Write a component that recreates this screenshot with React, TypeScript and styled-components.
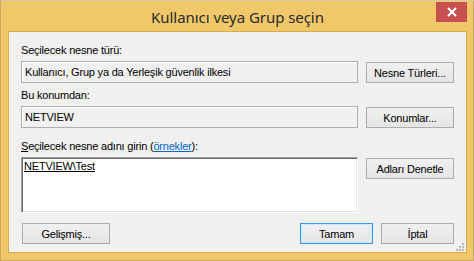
import styled, { createGlobalStyle } from "styled-components";

const Global = createGlobalStyle`
  html, body { margin: 0; padding: 0; background: #fff; }
  body { font-family: "Liberation Sans", Arial, sans-serif; }
`;

const UI = `"Liberation Sans", Arial, sans-serif`;

export default function App() {
  return (
    <>
      <Global />
      <Window>
        <TitleBar>
          <span />
          <Title>Kullanıcı veya Grup seçin</Title>
          <Close aria-label="Kapat">
            <svg width="10" height="10" viewBox="0 0 10 10">
              <path d="M1 1 L9 9 M9 1 L1 9" stroke="#fff" strokeWidth="2" />
            </svg>
          </Close>
        </TitleBar>
        <Client>
          <Section $top={12}>
            <Label>Seçilecek nesne türü:</Label>
            <Row>
              <Field>Kullanıcı, Grup ya da Yerleşik güvenlik ilkesi</Field>
              <Button $inRow>Nesne Türleri...</Button>
            </Row>
          </Section>
          <Section $top={6}>
            <Label>Bu konumdan:</Label>
            <Row>
              <Field>NETVIEW</Field>
              <Button $inRow>Konumlar...</Button>
            </Row>
          </Section>
          <Section $top={12}>
            <Label>
              <u>S</u>eçilecek nesne adını girin (<Link>örnekler</Link>):
            </Label>
            <Row>
              <TextArea>
                <Resolved>NETVIEW\Test</Resolved>
              </TextArea>
              <Button $inRow>Adları Denetle</Button>
            </Row>
          </Section>
          <Footer>
            <Button $w={88}>Gelişmiş...</Button>
            <Actions>
              <Button $w={73} $default>Tamam</Button>
              <Button $w={73}>İptal</Button>
            </Actions>
          </Footer>
          <Grip>
            <svg width="8" height="8" viewBox="0 0 8 8">
              {[
                [6, 0],
                [6, 3],
                [3, 3],
                [6, 6],
                [3, 6],
                [0, 6],
              ].map(([x, y]) => (
                <rect key={`${x}-${y}`} x={x} y={y} width="2" height="2" fill="#b8b8b8" />
              ))}
            </svg>
          </Grip>
        </Client>
      </Window>
    </>
  );
}

const Window = styled.div`
  width: 474px;
  height: 261px;
  box-sizing: border-box;
  background: #f0c86a;
  border: 1px solid #c9a85e;
  border-top-color: #d6c9a8;
  display: flex;
  flex-direction: column;
  padding: 0 6px 7px 7px;
`;
const TitleBar = styled.div`
  height: 30px;
  display: grid;
  grid-template-columns: 1fr auto 1fr;
  align-items: start;
`;
const Title = styled.div`
  font-family: "Noto Sans", "Open Sans", sans-serif;
  font-size: 15px;
  color: #2a2a2a;
  line-height: 20px;
  padding-top: 6px;
  letter-spacing: -0.05px;
`;
const Close = styled.div`
  justify-self: end;
  margin-top: 1px;
  width: 31px;
  height: 20px;
  background: #c75050;
  display: flex;
  align-items: center;
  justify-content: center;
`;
const Client = styled.div`
  position: relative;
  flex: 1;
  background: #f0f0f0;
  border: 1px solid #d4ac52;
  padding: 0 12px 8px 12px;
  display: flex;
  flex-direction: column;
  font-family: ${UI};
  font-size: 11px;
  letter-spacing: -0.2px;
  color: #000;
`;
const Section = styled.div<{ $top: number }>`
  margin-top: ${(p) => p.$top}px;
  display: flex;
  flex-direction: column;
  gap: 4px;
`;
const Label = styled.div`
  line-height: 13px;
  height: 13px;
  white-space: nowrap;
`;
const Link = styled.span`
  color: #0066cc;
  text-decoration: underline;
`;
const Row = styled.div`
  display: flex;
  align-items: flex-start;
  gap: 8px;
`;
const Field = styled.div`
  width: 337px;
  height: 22px;
  box-sizing: border-box;
  border: 1px solid #adadad;
  box-shadow: inset 1px 1px 0 #fff;
  padding: 0 3px;
  line-height: 20px;
  white-space: nowrap;
  overflow: hidden;
`;
const TextArea = styled.div`
  width: 337px;
  height: 56px;
  box-sizing: border-box;
  background: #fff;
  border-top: 1px solid #a0a0a0;
  border-left: 1px solid #a0a0a0;
  border-right: 1px solid #fff;
  border-bottom: 1px solid #fff;
  box-shadow: inset 1px 1px 0 #696969, inset -1px -1px 0 #e3e3e3;
  padding: 2px 2px;
  line-height: 13px;
`;
const Resolved = styled.span`
  text-decoration: underline;
`;
const Button = styled.div<{ $w?: number; $inRow?: boolean; $default?: boolean }>`
  width: ${(p) => p.$w ?? 88}px;
  height: 21px;
  margin-top: ${(p) => (p.$inRow ? 1 : 0)}px;
  box-sizing: border-box;
  border: 1px solid ${(p) => (p.$default ? "#3399ff" : "#acacac")};
  box-shadow: ${(p) => (p.$default ? "inset 0 0 0 1px #cfe6ff" : "none")};
  background: linear-gradient(#f0f0f0, #e5e5e5);
  display: flex;
  align-items: center;
  justify-content: center;
  white-space: nowrap;
  flex-shrink: 0;
`;
const Footer = styled.div`
  margin-top: 10px;
  display: flex;
  justify-content: space-between;
  padding-left: 1px;
`;
const Actions = styled.div`
  display: flex;
  gap: 8px;
`;
const Grip = styled.div`
  position: absolute;
  right: 2px;
  bottom: 1px;
  width: 8px;
  height: 8px;
  line-height: 0;
`;
